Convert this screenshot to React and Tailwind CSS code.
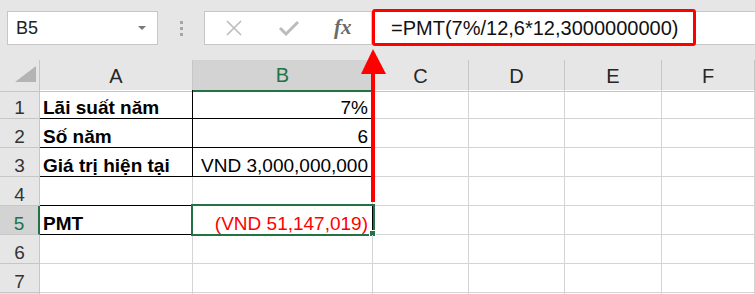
import React from 'react';

const cols = ['A', 'B', 'C', 'D', 'E', 'F'];

const rows = [
  { n: 1, a: 'Lãi suất năm', b: '7%', box: true },
  { n: 2, a: 'Số năm', b: '6', box: true },
  { n: 3, a: 'Giá trị hiện tại', b: 'VND 3,000,000,000', box: true },
  { n: 4, a: '', b: '', under: true },
  { n: 5, a: 'PMT', b: '(VND 51,147,019)', box: true, selected: true },
  { n: 6, a: '', b: '' },
  { n: 7, a: '', b: '' },
  { n: '', a: '', b: '' },
];

const gridCols = 'grid grid-cols-[40px_153px_180px_96px_96px_97px_1fr]';

function TopBar() {
  return (
    <div className="relative h-[60px] bg-[#e6e6e6] flex items-start pt-[11px]">
      <div className="ml-[7px] w-[151px] h-[34px] bg-white border border-[#c6c6c6] flex items-center justify-between pl-[8px] pr-[11px]">
        <span className="text-[18px] text-[#222]">B5</span>
        <span className="w-0 h-0 border-l-[4px] border-r-[4px] border-t-[4px] border-l-transparent border-r-transparent border-t-[#777]" />
      </div>
      <div className="w-[46px] h-[34px] flex flex-col items-center justify-center gap-[3px]">
        <span className="w-[3px] h-[3px] bg-[#a6a6a6]" />
        <span className="w-[3px] h-[3px] bg-[#a6a6a6]" />
        <span className="w-[3px] h-[3px] bg-[#a6a6a6]" />
      </div>
      <div className="w-[168px] h-[34px] bg-white border border-[#c6c6c6] flex items-center pl-[18px]">
        <svg width="20" height="16" viewBox="0 0 20 16" className="ml-[1px]">
          <path d="M3 1 L17 15 M17 1 L3 15" stroke="#bcbcbc" strokeWidth="1.6" fill="none" />
        </svg>
        <svg width="22" height="16" viewBox="0 0 22 16" className="ml-[34px]">
          <path d="M2 8 L8 14 L20 2" stroke="#bcbcbc" strokeWidth="3" fill="none" />
        </svg>
        <span className="ml-[34px] text-[21px] italic text-[#6a6a6a] font-['Liberation_Serif',serif] font-bold">fx</span>
      </div>
      <div className="flex-1 h-[34px] bg-white border-y border-[#c6c6c6] flex items-center pl-[19px]">
        <span className="text-[20px] text-[#111]">=PMT(7%/12,6*12,3000000000)</span>
      </div>
      <div className="absolute left-[372px] top-[9px] w-[324px] h-[37px] border-[3.5px] border-[#ff0000] rounded-[3px]" />
    </div>
  );
}

function HeaderRow() {
  return (
    <div className={`${gridCols} h-[30px] bg-[#e6e6e6]`}>
      <div className="relative border-r border-b border-[#c6c6c6]">
        <svg width="22" height="17" viewBox="0 0 22 17" className="absolute left-[15px] top-[6px]">
          <polygon points="21,0 21,16 0,16" fill="#b4b4b4" />
        </svg>
      </div>
      {cols.map((c) => (
        <div
          key={c}
          className={
            c === 'B'
              ? 'flex items-center justify-center bg-[#d3d3d3] text-[#217346] border-r border-[#c6c6c6] border-b-2 border-b-[#217346] text-[20px]'
              : 'flex items-center justify-center text-[#262626] border-r border-b border-[#c6c6c6] text-[20px]'
          }
        >
          {c}
        </div>
      ))}
    </div>
  );
}

function Row({ r }) {
  const blackA = r.box || r.under;
  return (
    <div className={`${gridCols} h-[29px]`}>
      <div
        className={
          r.selected
            ? 'flex items-end justify-center bg-[#d3d3d3] text-[#217346] border-r-2 border-r-[#217346] border-b border-[#c6c6c6] text-[19px] leading-[20px]'
            : 'flex items-end justify-center bg-[#e6e6e6] text-[#333] border-r border-b border-[#c6c6c6] text-[19px] leading-[20px]'
        }
      >
        {r.n}
      </div>
      <div
        className={`flex items-end pl-[3px] font-bold text-[19px] leading-[20px] text-black border-r border-b ${
          r.box ? 'border-r-black' : 'border-r-[#d4d4d4]'
        } ${blackA ? 'border-b-black' : 'border-b-[#d4d4d4]'}`}
      >
        {r.a}
      </div>
      <div
        className={`relative flex items-end justify-end pr-[4px] text-[19px] leading-[20px] border-r border-b ${
          r.box ? 'border-r-black' : 'border-r-[#d4d4d4]'
        } ${blackA ? 'border-b-black' : 'border-b-[#d4d4d4]'} ${r.selected ? 'text-[#ff0000]' : 'text-black'}`}
      >
        {r.b}
        {r.selected && (
          <div className="absolute left-[-2px] top-[-2px] w-[184px] h-[32px] border-2 border-[#217346]">
            <div className="absolute right-[-3px] bottom-[-3px] w-[7px] h-[7px] bg-[#217346] border border-white" />
          </div>
        )}
      </div>
      {cols.slice(2).map((c) => (
        <div key={c} className="border-r border-b border-[#d4d4d4]" />
      ))}
    </div>
  );
}

export default function App() {
  return (
    <div className="relative w-[755px] h-[294px] overflow-hidden bg-white font-['Liberation_Sans',Arial,sans-serif]">
      <TopBar />
      <HeaderRow />
      {rows.map((r, i) => (
        <Row key={i} r={r} />
      ))}
      <svg width="755" height="294" className="absolute left-0 top-0 pointer-events-none">
        <rect x="371" y="72" width="4" height="130" fill="#ff0000" />
        <polygon points="373,49 361,74 386,74" fill="#ff0000" />
      </svg>
    </div>
  );
}
